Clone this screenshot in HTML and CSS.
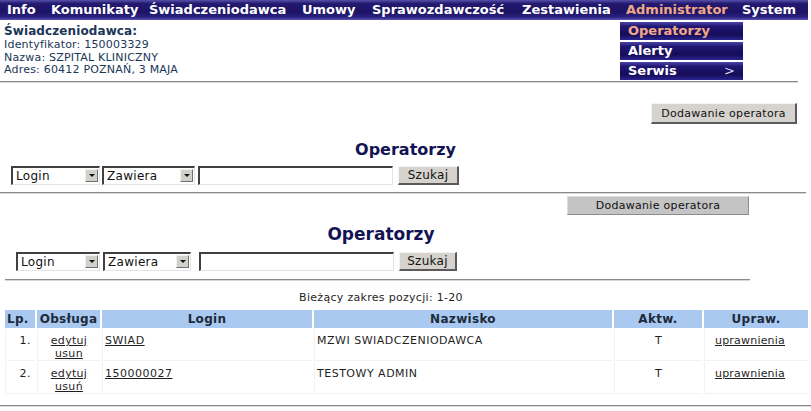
FILE: index.html
```html
<!DOCTYPE html>
<html lang="pl">
<head>
<meta charset="utf-8">
<title>Operatorzy</title>
<link rel="stylesheet" href="styles.css">
</head>
<body>
<nav class="topbar">
  <a class="nav-item i1">Info</a>
  <a class="nav-item i2">Komunikaty</a>
  <a class="nav-item i3">Świadczeniodawca</a>
  <a class="nav-item i4">Umowy</a>
  <a class="nav-item i5">Sprawozdawczość</a>
  <a class="nav-item i6">Zestawienia</a>
  <a class="nav-item i7 active">Administrator</a>
  <a class="nav-item i8">System</a>
</nav>
<ul class="dropdown">
  <li class="drop-item active">Operatorzy</li>
  <li class="drop-item">Alerty</li>
  <li class="drop-item has-sub"><span>Serwis</span><span class="sub-arrow">&gt;</span></li>
</ul>

<section class="provider">
  <div class="provider-title">Świadczeniodawca:</div>
  <div class="provider-line">Identyfikator: 150003329</div>
  <div class="provider-line">Nazwa: SZPITAL KLINICZNY</div>
  <div class="provider-line">Adres: 60412 POZNAŃ, 3 MAJA</div>
</section>
<div class="rule rule-head"></div>

<div class="add-row">
  <button class="btn btn-add">Dodawanie operatora</button>
</div>
<h1 class="title title-1">Operatorzy</h1>
<div class="search search-1">
  <div class="select sel-login"><span class="sel-text">Login</span><span class="sel-arrow"></span></div>
  <div class="select sel-mode"><span class="sel-text">Zawiera</span><span class="sel-arrow"></span></div>
  <div class="textbox"></div>
  <button class="btn btn-search">Szukaj</button>
</div>
<div class="rule rule-mid"></div>

<div class="inner">
  <div class="add-row-2">
    <button class="btn-flat">Dodawanie operatora</button>
  </div>
  <h1 class="title title-2">Operatorzy</h1>
  <div class="search search-2">
    <div class="select sel-login"><span class="sel-text">Login</span><span class="sel-arrow"></span></div>
    <div class="select sel-mode"><span class="sel-text">Zawiera</span><span class="sel-arrow"></span></div>
    <div class="textbox"></div>
    <button class="btn btn-search">Szukaj</button>
  </div>
  <div class="rule rule-inner"></div>
  <div class="range">Bieżący zakres pozycji: 1-20</div>
</div>

<table class="grid">
  <colgroup>
    <col class="c-lp"><col class="c-obs"><col class="c-login"><col class="c-name"><col class="c-act"><col class="c-perm">
  </colgroup>
  <thead>
    <tr><th>Lp.</th><th>Obsługa</th><th>Login</th><th>Nazwisko</th><th>Aktw.</th><th>Upraw.</th></tr>
  </thead>
  <tbody>
    <tr>
      <td class="num">1.</td>
      <td class="ops"><a>edytuj</a><br><a>usun</a></td>
      <td><a>SWIAD</a></td>
      <td>MZWI SWIADCZENIODAWCA</td>
      <td class="ctr">T</td>
      <td class="perm"><a>uprawnienia</a></td>
    </tr>
    <tr>
      <td class="num">2.</td>
      <td class="ops"><a>edytuj</a><br><a>usuń</a></td>
      <td><a>150000027</a></td>
      <td>TESTOWY ADMIN</td>
      <td class="ctr">T</td>
      <td class="perm"><a>uprawnienia</a></td>
    </tr>
  </tbody>
</table>
<div class="rule rule-foot"></div>
</body>
</html>
```

FILE: styles.css
```css
html, body {
  margin: 0;
  padding: 0;
  background: #ffffff;
  width: 811px;
  height: 411px;
  overflow: hidden;
}
body {
  font-family: "DejaVu Sans", Verdana, sans-serif;
  font-size: 11px;
  color: #1f1f1f;
  position: relative;
}

/* top navigation */
.topbar {
  display: flex;
  align-items: center;
  height: 20px;
  width: 808px;
  background: linear-gradient(#5650a8 0%, #231a70 18%, #1c1364 60%, #2a2180 85%, #5a54b0 100%);
  box-sizing: border-box;
  padding-left: 7px;
}
.nav-item {
  color: #ffffff;
  font-weight: bold;
  font-size: 13px;
  white-space: nowrap;
  line-height: 20px;
}
.i1 { width: 44px; }
.i2 { width: 98px; }
.i3 { width: 153px; }
.i4 { width: 70px; }
.i5 { width: 150px; }
.i6 { width: 104px; }
.i7 { width: 116px; }
.nav-item.active { color: #f0a888; }

/* dropdown menu (overlay) */
.dropdown {
  position: absolute;
  top: 22px;
  left: 620px;
  width: 123px;
  margin: 0;
  padding: 0;
  list-style: none;
  display: flex;
  flex-direction: column;
  gap: 2px;
}
.drop-item {
  height: 18px;
  line-height: 18px;
  padding-left: 8px;
  padding-right: 8px;
  font-weight: bold;
  font-size: 13px;
  color: #ffffff;
  background: linear-gradient(#4a44a6 0%, #211772 25%, #150c58 70%, #2c2490 100%);
  display: flex;
  justify-content: space-between;
}
.drop-item.active { color: #f0a888; }
.sub-arrow { font-weight: normal; color: #d8d8f0; }

/* provider info */
.provider {
  padding: 4px 0 0 4px;
  height: 54px;
  color: #1a3658;
  letter-spacing: 0.2px;
}
.provider-title {
  font-weight: bold;
  font-size: 12px;
  line-height: 15px;
  letter-spacing: 0.1px;
}
.provider-line {
  line-height: 12.5px;
}

.rule {
  height: 0;
  border-top: 1px solid #8a8a8a;
  border-bottom: 1px solid #d8d8d8;
}
.rule-head { width: 798px; margin-top: 3px; }
.rule-mid { width: 806px; margin-top: 7px; }
.rule-inner { width: 745px; margin-left: 5px; margin-top: 8px; }
.rule-foot { width: 811px; margin-top: 10px; }

/* first block */
.add-row {
  display: flex;
  justify-content: flex-end;
  padding-right: 14px;
  margin-top: 20px;
}
.btn {
  font-family: "DejaVu Sans", Verdana, sans-serif;
  font-size: 11px;
  color: #111;
  background: #d6d3ce;
  border-style: solid;
  border-width: 1px 2px 2px 1px;
  border-color: #f4f4f4 #5a5a5a #5a5a5a #f4f4f4;
  padding: 0;
  margin: 0;
  letter-spacing: 0.3px;
}
.btn-add { width: 146px; height: 21px; }

.title {
  margin: 0;
  text-align: center;
  font-weight: bold;
  color: #141454;
  line-height: 20px;
}
.title-1 { font-size: 16px; margin-top: 16px; }
.title-2 { font-size: 17px; margin-top: 9px; width: 762px; }

.search {
  display: flex;
  align-items: center;
  height: 20px;
}
.search-1 { margin-top: 5px; padding-left: 11px; }
.search-2 { margin-top: 7px; padding-left: 16px; }

.select {
  position: relative;
  box-sizing: border-box;
  height: 19px;
  background: #fff;
  border-style: solid;
  border-width: 2px 1px 1px 2px;
  border-color: #404040 #e4e4e4 #e4e4e4 #404040;
  display: flex;
  align-items: center;
  justify-content: space-between;
  padding-left: 3px;
  padding-right: 1px;
  font-size: 12px;
  color: #111;
  letter-spacing: 0.3px;
}
.search-1 .sel-login { width: 89px; margin-right: 2px; }
.search-1 .sel-mode { width: 93px; margin-right: 3px; }
.search-2 .sel-login { width: 84px; margin-right: 3px; }
.search-2 .sel-mode { width: 88px; margin-right: 8px; }
.sel-arrow {
  width: 13px;
  height: 13px;
  box-sizing: border-box;
  background: #d2d0cb;
  border: 1px solid;
  border-color: #f0f0f0 #707070 #707070 #f0f0f0;
  display: flex;
  align-items: center;
  justify-content: center;
}
.sel-arrow::after {
  content: "";
  border-left: 3px solid transparent;
  border-right: 3px solid transparent;
  border-top: 3px solid #111;
}
.textbox {
  box-sizing: border-box;
  height: 19px;
  background: #fff;
  border-style: solid;
  border-width: 2px 1px 1px 2px;
  border-color: #404040 #e4e4e4 #e4e4e4 #404040;
  margin-right: 5px;
}
.search-1 .textbox { width: 195px; }
.search-2 .textbox { width: 195px; }
.btn-search { height: 19px; font-size: 12px; }
.search-1 .btn-search { width: 61px; }
.search-2 .btn-search { width: 58px; }

/* inner block */
.inner { width: 762px; }
.add-row-2 {
  display: flex;
  justify-content: flex-end;
  padding-right: 13px;
  margin-top: 2px;
}
.btn-flat {
  width: 182px;
  height: 19px;
  font-family: "DejaVu Sans", Verdana, sans-serif;
  font-size: 11px;
  letter-spacing: 0.3px;
  color: #111;
  background: #c4c4c4;
  border-style: solid;
  border-width: 1px;
  border-color: #dcdcdc #8c8c8c #8c8c8c #dcdcdc;
  padding: 0;
}
.range {
  text-align: center;
  margin-top: 10px;
  line-height: 13px;
  letter-spacing: 0.3px;
}

/* table */
.grid {
  margin-top: 5px;
  margin-left: 3px;
  border-collapse: separate;
  border-spacing: 2px 1px;
  table-layout: fixed;
  width: 805px;
}
.c-lp { width: 30px; }
.c-obs { width: 63px; }
.c-login { width: 210px; }
.c-name { width: 298px; }
.c-act { width: 88px; }
.c-perm { width: 104px; }
.grid th {
  background: #a9c9f1;
  color: #1d2a3a;
  font-size: 12px;
  font-weight: bold;
  height: 18px;
  padding: 0;
  text-align: center;
  letter-spacing: 0.3px;
}
.grid th:first-child { text-align: left; padding-left: 2px; }
.grid td {
  height: 26px;
  vertical-align: top;
  padding: 5px 2px 0 2px;
  border-left: 1px solid #f2f2f2;
  border-bottom: 1px solid #f2f2f2;
  line-height: 13px;
  white-space: nowrap;
  overflow: hidden;
  letter-spacing: 0.5px;
}
.grid a { color: #1f1f1f; text-decoration: underline; }
.grid td.num { text-align: right; padding-right: 4px; }
.grid td.ops { text-align: center; letter-spacing: 0.3px; }
.grid td.ctr { text-align: center; }
.grid td.perm { padding-left: 10px; letter-spacing: 0.2px; }
```
